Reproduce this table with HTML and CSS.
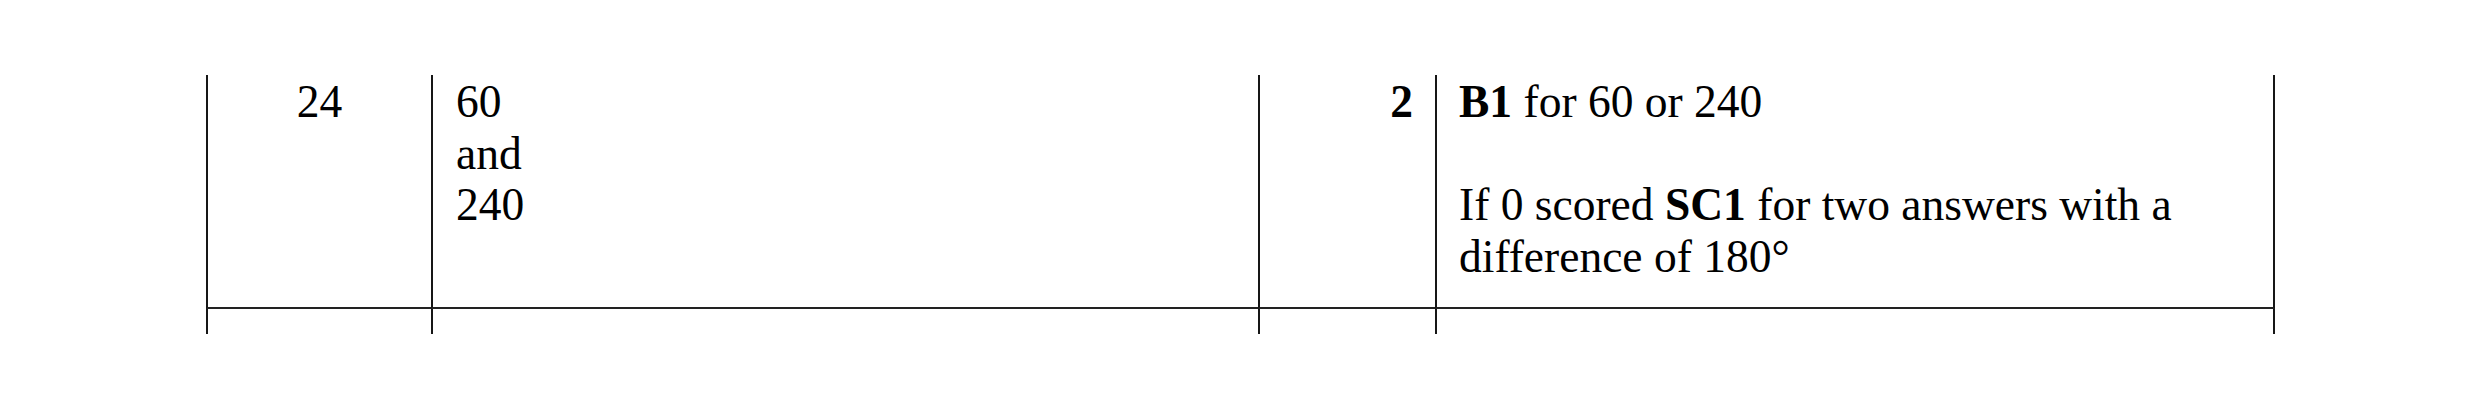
FILE: index.html
```html
<!DOCTYPE html>
<html lang="en">
<head>
<meta charset="utf-8">
<title>Mark scheme</title>
<link rel="stylesheet" href="styles.css">
</head>
<body>
<div class="sheet">
  <div class="grid">
    <div class="cell num">24</div>
    <div class="cell answer">60<br>and<br>240</div>
    <div class="cell marks">2</div>
    <div class="cell notes last">
      <p><b>B1</b> for 60 or 240</p>
      <p class="gap">If 0 scored <b>SC1</b> for two answers with a difference of 180°</p>
    </div>
    <div class="cell tail"></div>
    <div class="cell tail"></div>
    <div class="cell tail"></div>
    <div class="cell tail last"></div>
  </div>
</div>
</body>
</html>
```

FILE: styles.css
```css
html, body {
  margin: 0;
  padding: 0;
  background: #ffffff;
}

.sheet {
  padding: 75px 0 0 206px;
  font-family: "Liberation Serif", "Times New Roman", serif;
  font-size: 45.5px;
  line-height: 51.5px;
  color: #000000;
}

.grid {
  display: grid;
  grid-template-columns: 225px 827px 177px 840px;
  width: 2069px;
}

.cell {
  box-sizing: border-box;
  border-left: 2px solid #161616;
  padding: 1px 22px 25px 22px;
  border-bottom: 2px solid #222222;
}

.cell.last {
  border-right: 2px solid #161616;
}

.num {
  text-align: center;
}

.answer {
  padding-left: 23px;
}

.marks {
  text-align: right;
  font-weight: bold;
}

.notes p {
  margin: 0;
}

.notes .gap {
  margin-top: 51.5px;
}

.cell.tail {
  height: 25px;
  padding: 0;
  border-bottom: none;
}
```
